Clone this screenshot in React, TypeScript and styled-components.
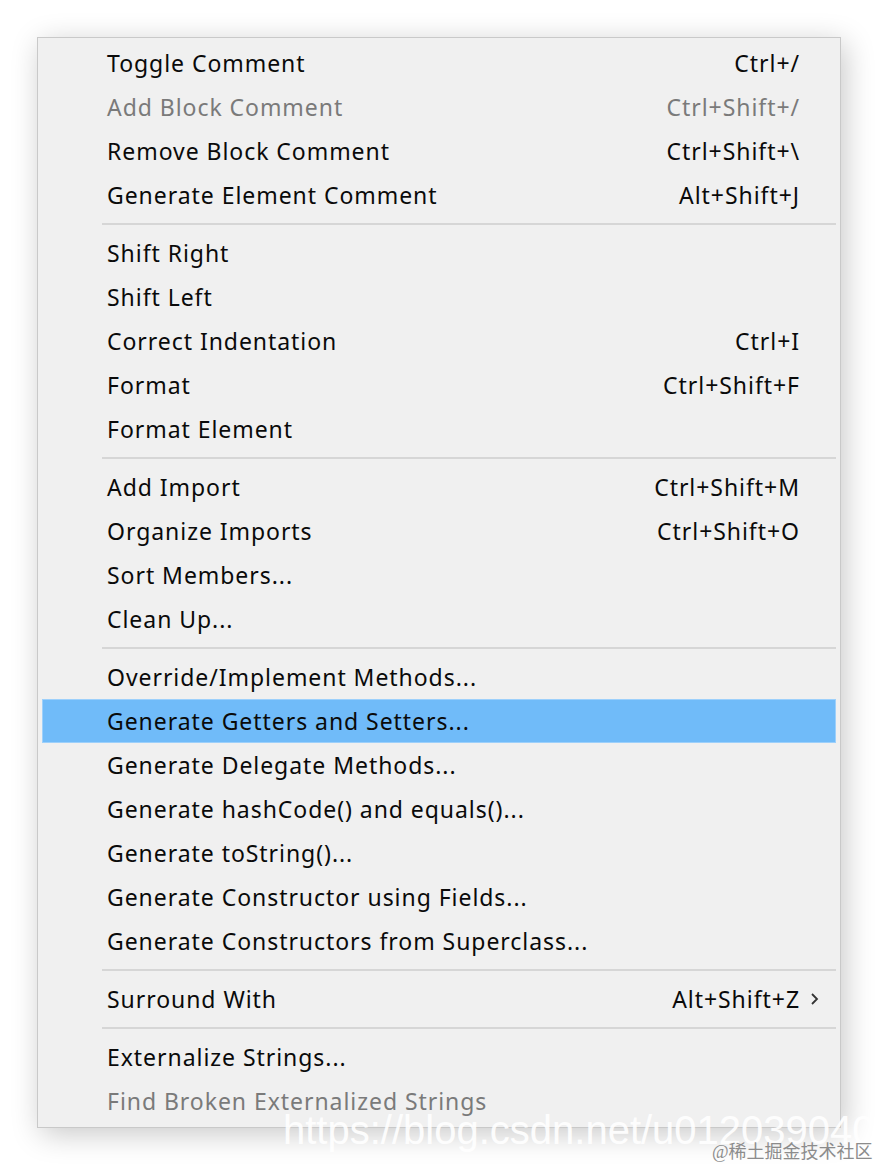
import React from "react";
import styled, { createGlobalStyle } from "styled-components";

const GlobalStyle = createGlobalStyle`
  body {
    margin: 0;
    background: #ffffff;
    font-family: "Noto Sans", "Open Sans", sans-serif;
  }
`;

const Page = styled.div`
  position: relative;
  width: 878px;
  height: 1166px;
  padding: 37px 0 0 37px;
  box-sizing: border-box;
  overflow: hidden;
`;

const Menu = styled.div`
  width: 804px;
  box-sizing: border-box;
  background: #f0f0f0;
  border: 1px solid #c9c9c9;
  padding: 3px 4px 4px 4px;
  box-shadow: 4px 6px 28px rgba(0, 0, 0, 0.22);
`;

const Item = styled.div<{ $active?: boolean; $disabled?: boolean }>`
  height: 44px;
  display: flex;
  align-items: center;
  box-sizing: border-box;
  padding-left: 64px;
  font-size: 23px;
  letter-spacing: 0.95px;
  color: ${(p) => (p.$disabled ? "#7a7a7a" : "#0a0a0a")};
  background: ${(p) => (p.$active ? "#70bbf9" : "transparent")};
  border: 1px solid ${(p) => (p.$active ? "#9dd0fb" : "transparent")};
`;

const Label = styled.span`
  flex: 1;
  white-space: nowrap;
`;

const Shortcut = styled.span`
  white-space: nowrap;
`;

const Arrow = styled.span`
  width: 35px;
  display: flex;
  align-items: center;
  padding-left: 10px;
  box-sizing: border-box;
  color: #333;
`;

const Separator = styled.div`
  height: 14px;
  display: flex;
  align-items: center;
  padding-left: 60px;

  &::after {
    content: "";
    flex: 1;
    height: 2px;
    background: #d6d6d6;
  }
`;

const Watermark = styled.div`
  position: absolute;
  left: 283px;
  top: 1108px;
  font-family: "Liberation Sans", Arial, sans-serif;
  font-size: 40px;
  color: rgba(255, 255, 255, 0.92);
  white-space: nowrap;
`;

const Credit = styled.div`
  position: absolute;
  left: 712px;
  top: 1137px;
  font-family: "Liberation Serif", "Noto Sans CJK SC", serif;
  font-size: 18px;
  color: #8c8c8c;
  white-space: nowrap;
`;

type Entry =
  | { sep: true }
  | {
      sep?: false;
      label: string;
      key?: string;
      disabled?: boolean;
      active?: boolean;
      sub?: boolean;
    };

const entries: Entry[] = [
  { label: "Toggle Comment", key: "Ctrl+/" },
  { label: "Add Block Comment", key: "Ctrl+Shift+/", disabled: true },
  { label: "Remove Block Comment", key: "Ctrl+Shift+\\" },
  { label: "Generate Element Comment", key: "Alt+Shift+J" },
  { sep: true },
  { label: "Shift Right" },
  { label: "Shift Left" },
  { label: "Correct Indentation", key: "Ctrl+I" },
  { label: "Format", key: "Ctrl+Shift+F" },
  { label: "Format Element" },
  { sep: true },
  { label: "Add Import", key: "Ctrl+Shift+M" },
  { label: "Organize Imports", key: "Ctrl+Shift+O" },
  { label: "Sort Members..." },
  { label: "Clean Up..." },
  { sep: true },
  { label: "Override/Implement Methods..." },
  { label: "Generate Getters and Setters...", active: true },
  { label: "Generate Delegate Methods..." },
  { label: "Generate hashCode() and equals()..." },
  { label: "Generate toString()..." },
  { label: "Generate Constructor using Fields..." },
  { label: "Generate Constructors from Superclass..." },
  { sep: true },
  { label: "Surround With", key: "Alt+Shift+Z", sub: true },
  { sep: true },
  { label: "Externalize Strings..." },
  { label: "Find Broken Externalized Strings", disabled: true },
];

const App = () => {
  return (
    <Page>
      <GlobalStyle />
      <Menu>
        {entries.map((e, i) =>
          e.sep ? (
            <Separator key={i} />
          ) : (
            <Item key={i} $active={e.active} $disabled={e.disabled}>
              <Label>{e.label}</Label>
              {e.key && <Shortcut>{e.key}</Shortcut>}
              <Arrow>
                {e.sub && (
                  <svg width="10" height="14" viewBox="0 0 10 14">
                    <path d="M2 2 L7 7 L2 12" fill="none" stroke="#333" strokeWidth="1.8" />
                  </svg>
                )}
              </Arrow>
            </Item>
          )
        )}
      </Menu>
      <Watermark>https://blog.csdn.net/u012039040</Watermark>
      <Credit>@稀土掘金技术社区</Credit>
    </Page>
  );
};

export default App;
